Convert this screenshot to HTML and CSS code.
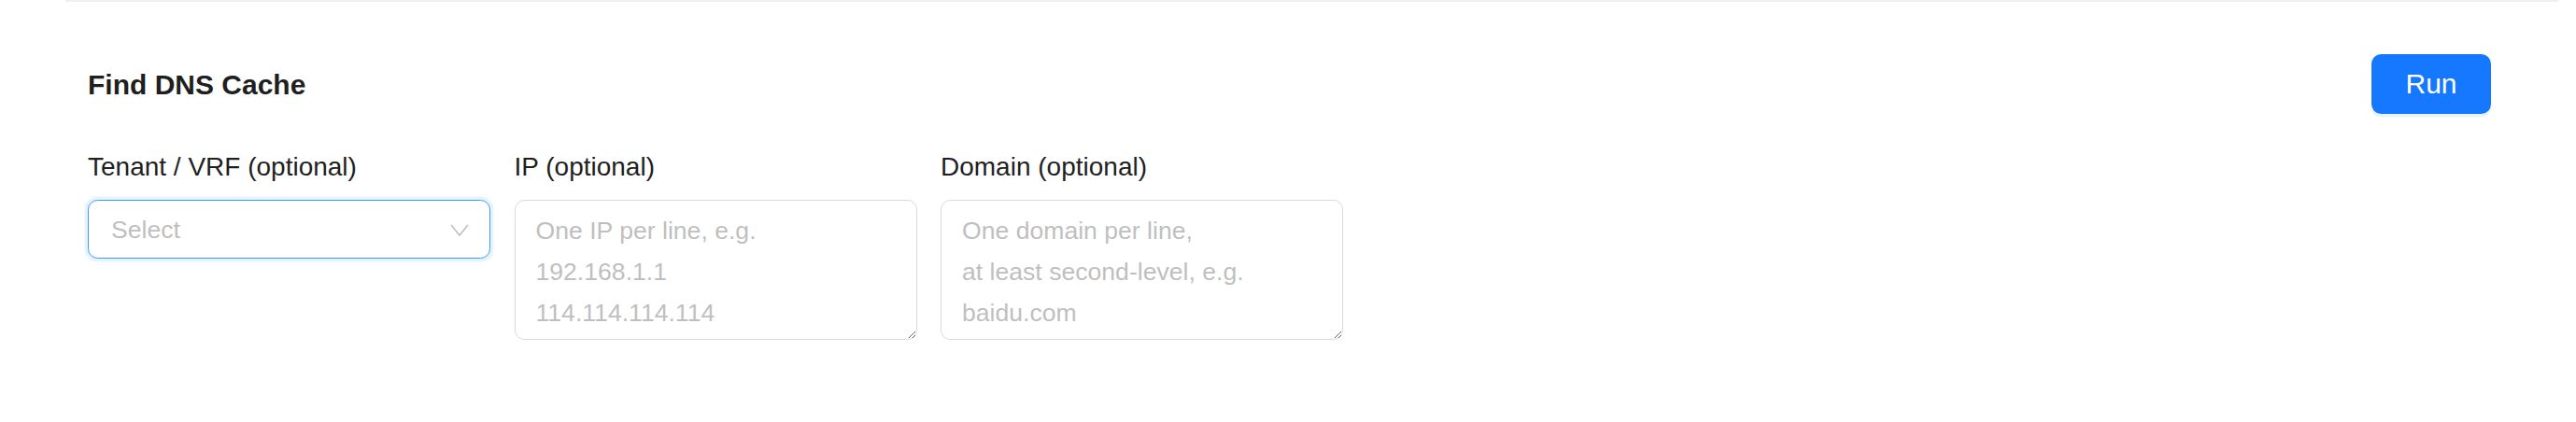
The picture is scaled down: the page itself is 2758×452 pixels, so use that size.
FILE: index.html
```html
<!DOCTYPE html>
<html lang="en">
<head>
<meta charset="utf-8">
<title>Find DNS Cache</title>
<link rel="stylesheet" href="styles.css">
</head>
<body>
<div class="page">
  <div class="topline"></div>
  <section class="panel">
    <header class="panel-head">
      <h2 class="title">Find DNS Cache</h2>
      <button class="btn-primary" type="button">Run</button>
    </header>
    <div class="fields">
      <div class="field">
        <label class="field-label">Tenant / VRF (optional)</label>
        <div class="select is-focused">
          <span class="select-placeholder">Select</span>
          <svg class="select-arrow" width="20" height="13" viewBox="0 0 20 13" aria-hidden="true">
            <polyline points="1,1 10,12 19,1" fill="none" stroke="#bfbfbf" stroke-width="1.6" stroke-linejoin="miter"/>
          </svg>
        </div>
      </div>
      <div class="field">
        <label class="field-label">IP (optional)</label>
        <textarea class="textarea" placeholder="One IP per line, e.g.&#10;192.168.1.1&#10;114.114.114.114"></textarea>
      </div>
      <div class="field">
        <label class="field-label">Domain (optional)</label>
        <textarea class="textarea" placeholder="One domain per line,&#10;at least second-level, e.g.&#10;baidu.com"></textarea>
      </div>
    </div>
  </section>
</div>
</body>
</html>
```
FILE: styles.css
```css
* {
  box-sizing: border-box;
}

html, body {
  margin: 0;
  padding: 0;
  background: #ffffff;
}

body {
  font-family: "Liberation Sans", Arial, Helvetica, sans-serif;
  color: #1f1f1f;
}

.page {
  padding: 0 19px 0 70px;
}

.topline {
  height: 2px;
  background: #efefef;
}

.panel {
  padding: 56px 72px 0 24px;
}

.panel-head {
  display: flex;
  align-items: center;
  justify-content: space-between;
  height: 64px;
}

.title {
  margin: 0;
  font-size: 30px;
  line-height: 45px;
  font-weight: 700;
  color: #1f1f1f;
}

.btn-primary {
  width: 128px;
  height: 64px;
  border: none;
  border-radius: 10.5px;
  background: #1677ff;
  color: #ffffff;
  font-family: "Liberation Sans", Arial, Helvetica, sans-serif;
  font-size: 30px;
  padding: 0;
  box-shadow: 0 3.5px 0 rgba(5, 145, 255, 0.1);
  cursor: pointer;
}

.fields {
  display: grid;
  grid-template-columns: repeat(3, 431px);
  column-gap: 25.5px;
  margin-top: 35px;
  align-items: start;
}

.field {
  display: flex;
  flex-direction: column;
}

.field-label {
  font-size: 28px;
  line-height: 44px;
  color: #1f1f1f;
  margin-bottom: 13px;
}

.select {
  height: 63px;
  display: flex;
  align-items: center;
  justify-content: space-between;
  padding: 2px 22px 0 24px;
  border: 1.75px solid #d9d9d9;
  border-radius: 10.5px;
  background: #ffffff;
}

.select.is-focused {
  border-color: #4096ff;
  box-shadow: 0 0 0 3.5px rgba(5, 145, 255, 0.1);
}

.select-placeholder {
  font-size: 26.6px;
  color: #bfbfbf;
}

.select-arrow {
  display: block;
  margin-top: -1px;
}

.textarea {
  display: block;
  width: 100%;
  height: 150px;
  margin: 0;
  padding: 10px 22px 0 22px;
  border: 1.75px solid #d9d9d9;
  border-radius: 10.5px;
  font-family: "Liberation Sans", Arial, Helvetica, sans-serif;
  font-size: 26.6px;
  line-height: 44px;
  color: #1f1f1f;
  background: #ffffff;
  outline: none;
}

.textarea::placeholder {
  color: #bfbfbf;
  opacity: 1;
}
```
